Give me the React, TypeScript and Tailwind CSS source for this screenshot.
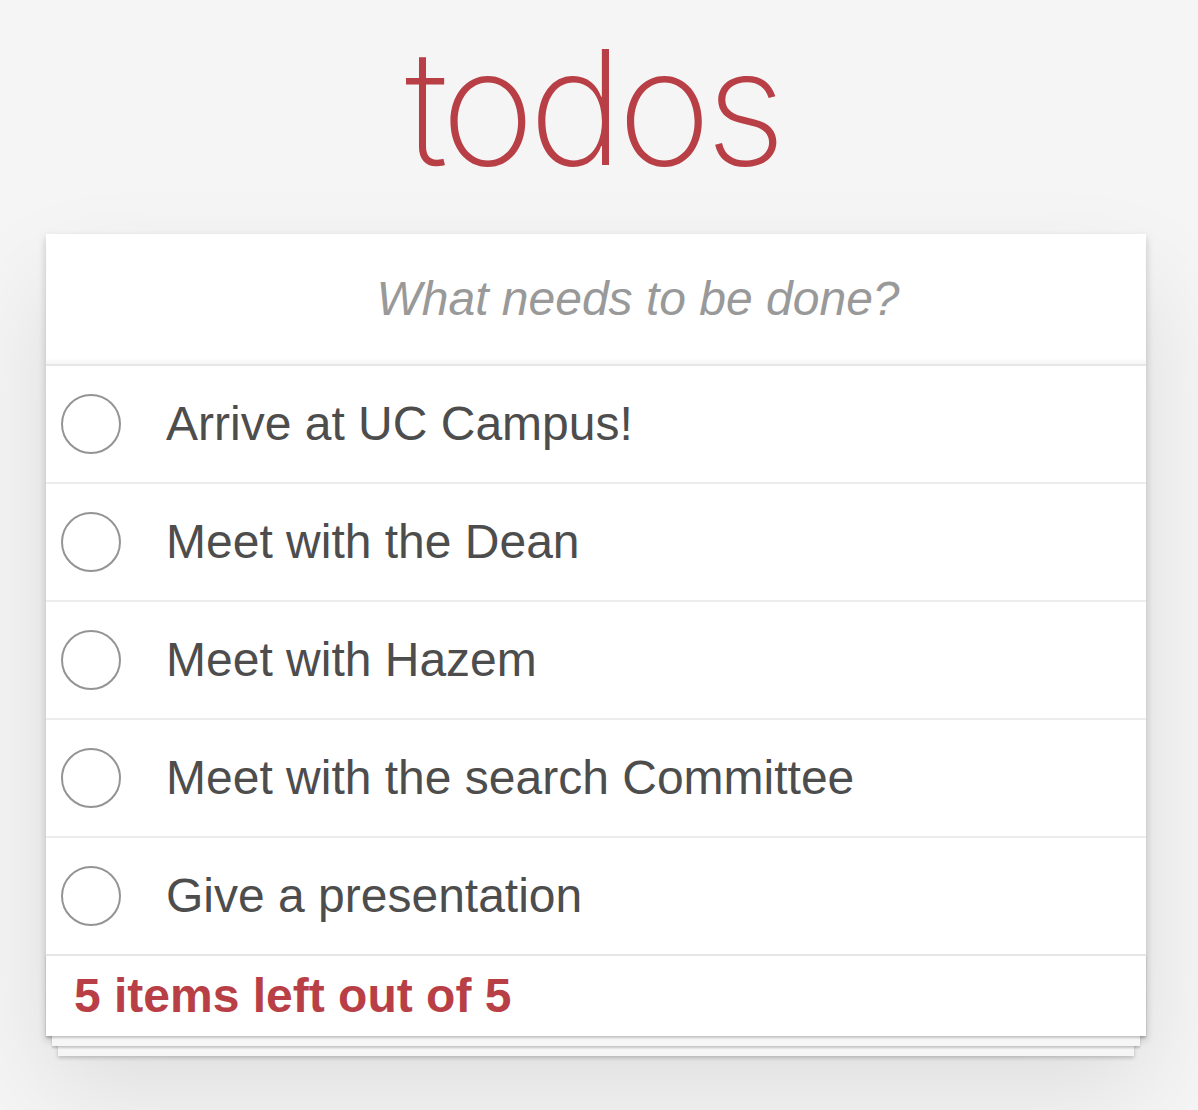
import React from "react";

const items = [
  "Arrive at UC Campus!",
  "Meet with the Dean",
  "Meet with Hazem",
  "Meet with the search Committee",
  "Give a presentation",
];

function Circle() {
  return (
    <svg width="60" height="60" viewBox="0 0 60 60" className="shrink-0">
      <circle cx="30" cy="30" r="29" fill="none" stroke="#949494" strokeWidth="2" />
    </svg>
  );
}

export default function App() {
  return (
    <div
      className="min-h-screen bg-[#f5f5f5]"
      style={{ fontFamily: '"Liberation Sans", Arial, sans-serif' }}
    >
      <div className="ml-[46px] w-[1100px] pt-[27px]">
        <h1
          className="text-center text-[160px] leading-none font-extralight tracking-[-6px] text-[#b83f45] mb-[47px] pr-[7px]"
          style={{ fontFamily: 'Inter, "Helvetica Neue", sans-serif' }}
        >
          todos
        </h1>
        <section className="bg-white shadow-[0_4px_8px_rgba(0,0,0,0.2),0_50px_100px_rgba(0,0,0,0.1)]">
          <header className="h-[130px] shadow-[inset_0_-4px_2px_rgba(0,0,0,0.03)] flex items-center">
            <input
              className="w-full bg-transparent outline-none pl-[120px] pr-[36px] text-center text-[48px] text-[#4d4d4d] placeholder:italic placeholder:text-[#999]"
              placeholder="What needs to be done?"
            />
          </header>
          <ul className="border-t-2 border-[#e6e6e6]">
            {items.map((t, i) =>
              i < items.length - 1 ? (
                <li key={t} className="h-[118px] flex items-center border-b-2 border-[#ededed]">
                  <div className="ml-[15px]">
                    <Circle />
                  </div>
                  <span className="ml-[45px] text-[48px] text-[#4d4d4d] leading-none">{t}</span>
                </li>
              ) : (
                <li key={t} className="h-[116px] flex items-center">
                  <div className="ml-[15px]">
                    <Circle />
                  </div>
                  <span className="ml-[45px] text-[48px] text-[#4d4d4d] leading-none">{t}</span>
                </li>
              )
            )}
          </ul>
          <footer className="h-[82px] border-t-2 border-[#e6e6e6] bg-white flex items-center pl-[28px] shadow-[0_2px_2px_rgba(0,0,0,0.2),0_16px_0_-6px_#f6f6f6,0_18px_2px_-6px_rgba(0,0,0,0.2),0_32px_0_-12px_#f6f6f6,0_34px_4px_-12px_rgba(0,0,0,0.2)]">
            <span className="text-[48px] font-bold text-[#b83f45] leading-none">
              5 items left out of 5
            </span>
          </footer>
        </section>
      </div>
    </div>
  );
}
